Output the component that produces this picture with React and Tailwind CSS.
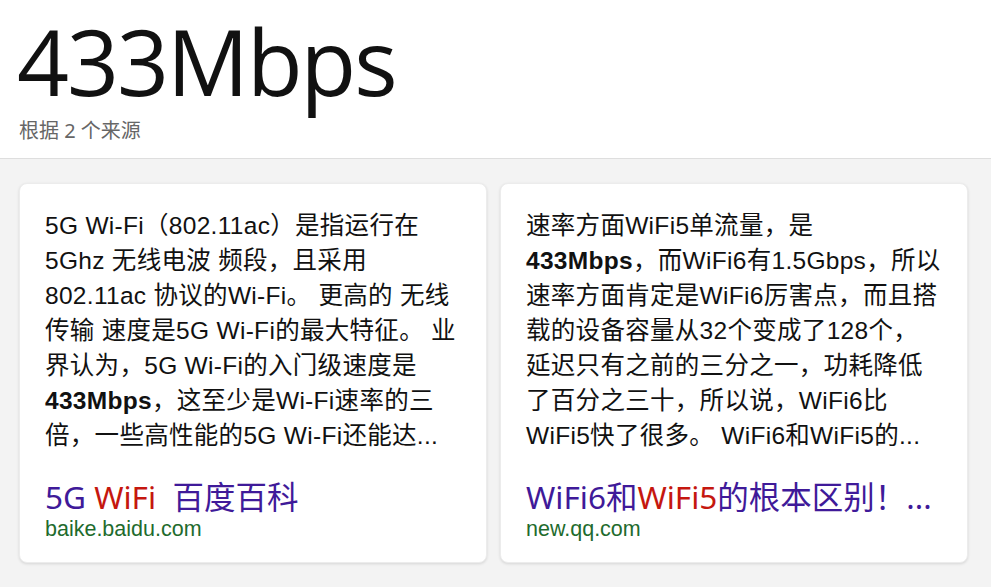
const body = '"Liberation Sans", "Noto Sans CJK SC", sans-serif'
const title = '"Noto Sans", "Noto Sans CJK SC", sans-serif'

function Card({ lines, titleParts, url }) {
  return (
    <div className="w-[468px] h-[380px] shrink-0 rounded-lg bg-white shadow-[0_1px_3px_rgba(0,0,0,0.12)] border border-[#ececec] px-[25px] pt-[24px]">
      <div className="text-[24.5px] leading-[35px] text-[#111] tracking-[0.3px]" style={{ fontFamily: body }}>
        {lines.map((l, i) => (
          <div key={i} className="whitespace-nowrap">{l}</div>
        ))}
      </div>
      <div className="mt-[26px] text-[31.5px] leading-[36px] whitespace-pre" style={{ fontFamily: title }}>
        {titleParts.map(([t, red], i) => (
          <span key={i} className={red ? 'text-[#c5170f]' : 'text-[#3f1a99]'}>{t}</span>
        ))}
      </div>
      <div className="mt-[1px] text-[21.5px] leading-[26px] text-[#1e6b2d]" style={{ fontFamily: body }}>{url}</div>
    </div>
  )
}

export default function App() {
  return (
    <div className="w-[991px] h-[587px] bg-[#f3f3f3] overflow-hidden">
      <div className="h-[159px] bg-white border-b border-[#dedede] px-[17px] pt-[15px]">
        <div className="text-[91px] leading-[92px] text-[#111] font-normal tracking-[-2px]" style={{ fontFamily: '"Open Sans", sans-serif' }}>433Mbps</div>
        <div className="mt-[10px] text-[20px] leading-[28px] text-[#666] pl-[2px]" style={{ fontFamily: '"Noto Sans", "Noto Sans CJK SC", sans-serif' }}>根据 2 个来源</div>
      </div>
      <div className="flex gap-[13px] pl-[19px] pt-[24px]">
        <Card
          lines={[
            '5G Wi-Fi（802.11ac）是指运行在',
            '5Ghz 无线电波 频段，且采用',
            '802.11ac 协议的Wi-Fi。 更高的 无线',
            '传输 速度是5G Wi-Fi的最大特征。 业',
            '界认为，5G Wi-Fi的入门级速度是',
            <><b>433Mbps</b>，这至少是Wi-Fi速率的三</>,
            '倍，一些高性能的5G Wi-Fi还能达...',
          ]}
          titleParts={[['5G ', false], ['WiFi', true], ['  百度百科', false]]}
          url="baike.baidu.com"
        />
        <Card
          lines={[
            '速率方面WiFi5单流量，是',
            <><b>433Mbps</b>，而WiFi6有1.5Gbps，所以</>,
            '速率方面肯定是WiFi6厉害点，而且搭',
            '载的设备容量从32个变成了128个，',
            '延迟只有之前的三分之一，功耗降低',
            '了百分之三十，所以说，WiFi6比',
            'WiFi5快了很多。 WiFi6和WiFi5的...',
          ]}
          titleParts={[['WiFi6和', false], ['WiFi5', true], ['的根本区别！...', false]]}
          url="new.qq.com"
        />
      </div>
    </div>
  )
}
